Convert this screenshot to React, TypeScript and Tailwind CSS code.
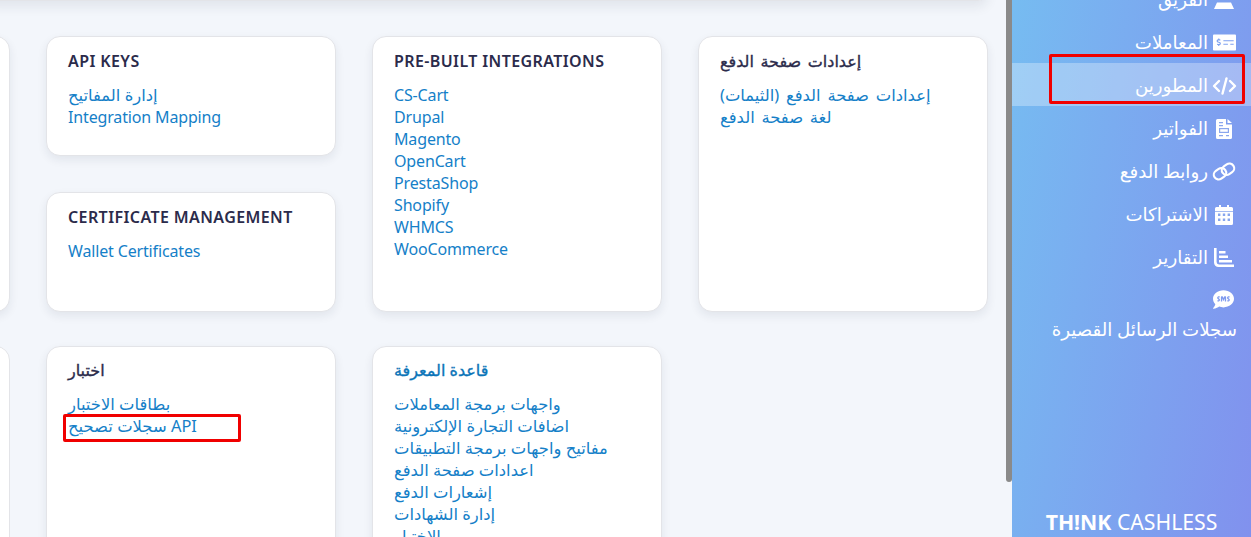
import { FaMoneyCheckAlt, FaSms } from 'react-icons/fa'
import { ReactNode } from 'react'

const font = "font-['Noto_Sans','DejaVu_Sans',sans-serif]"
const isArabic = (s: string) => /[\u0600-\u06ff]/.test(s)

function Card({ title, links, className = '', blueTitle = false }: { title: string; links: string[]; className?: string; blueTitle?: boolean }) {
  return (
    <div className={`w-[290px] shrink-0 rounded-[14px] border border-[#e3e4e8] bg-white px-[21px] shadow-[0_4px_10px_rgba(30,40,70,0.08)] ${className}`}>
      <h3
        className={`h-[24px] leading-[24px] whitespace-nowrap ${
          isArabic(title) ? 'text-[16px] font-normal [-webkit-text-stroke:0.35px_currentColor]' : 'text-[16px] font-semibold tracking-[0.4px]'
        } ${blueTitle ? 'text-[#0b74b8]' : 'text-[#2b2b4b]'}`}
      >
        {title}
      </h3>
      <div className="mt-[11px] flex flex-col items-start leading-[22px] text-[#1580c8]">
        {links.map((l) => (
          <a key={l} className={`h-[22px] whitespace-nowrap ${isArabic(l) ? 'text-[16.4px]' : 'text-[16px] tracking-[-0.15px]'}`}>
            {l}
          </a>
        ))}
      </div>
    </div>
  )
}

function NavItem({ icon, label, active = false }: { icon: ReactNode; label: string; active?: boolean }) {
  return (
    <div className={`flex h-[43px] items-center justify-start gap-[3px] pt-[2px] pr-[14px] text-[18.2px] text-white ${active ? 'bg-white/30' : ''}`} dir="rtl">
      <span className="flex w-[26px] justify-center">{icon}</span>
      <span className="whitespace-nowrap">{label}</span>
    </div>
  )
}

const TeamIcon = () => (
  <svg width="22" height="20" viewBox="0 0 22 20" fill="#fff">
    <circle cx="11" cy="5" r="5" />
    <path d="M4 12.5 h14 l3 6.5 h-20 z" />
  </svg>
)

const CodeIcon = () => (
  <svg width="25" height="18" viewBox="0 0 25 18" fill="none" stroke="#fff" strokeWidth="2.4" strokeLinecap="round" strokeLinejoin="round">
    <path d="M7 4 2 9l5 5" />
    <path d="m18 4 5 5-5 5" />
    <path d="M14.5 1.5 10.5 16.5" />
  </svg>
)

const InvoiceIcon = () => (
  <svg width="16" height="20" viewBox="0 0 16 20">
    <path fill="#fff" d="M1.5 0H10v5.5h6V18.5a1.5 1.5 0 0 1-1.5 1.5h-13A1.5 1.5 0 0 1 0 18.5v-17A1.5 1.5 0 0 1 1.5 0Z" />
    <path fill="#fff" d="M11.5 0 16 4h-4.5Z" />
    <path fill="#8aa6ee" d="M3 3h4v1.2H3ZM3 6h4v1.2H3ZM3 9h10v5H3Zm0 7h4v1.2H3Zm7 0h3v1.2h-3Z" />
    <path fill="#fff" d="M4.2 10.2h7.6v2.6H4.2Z" />
  </svg>
)

const LinkIcon = () => (
  <svg width="24" height="21" viewBox="0 0 24 21" fill="none" stroke="#fff" strokeWidth="2.2">
    <rect x="1.5" y="8" width="13" height="9.5" rx="4.75" transform="rotate(-35 8 12.75)" />
    <rect x="9.5" y="3.5" width="13" height="9.5" rx="4.75" transform="rotate(-35 16 8.25)" />
  </svg>
)

const CalendarIcon = () => (
  <svg width="18" height="20" viewBox="0 0 18 20">
    <path fill="#fff" d="M4 0h2v3H4Zm8 0h2v3h-2ZM1.5 2h15A1.5 1.5 0 0 1 18 3.5v15a1.5 1.5 0 0 1-1.5 1.5h-15A1.5 1.5 0 0 1 0 18.5v-15A1.5 1.5 0 0 1 1.5 2Z" />
    <path fill="#86a5ee" d="M0 6h18v.8H0ZM3 8.5h2.4v2.4H3Zm4.8 0h2.4v2.4H7.8Zm4.8 0H15v2.4h-2.4ZM3 13.5h2.4v2.4H3Zm4.8 0h2.4v2.4H7.8Zm4.8 0H15v2.4h-2.4Z" />
  </svg>
)

const ChartIcon = () => (
  <svg width="20" height="19" viewBox="0 0 20 19" fill="#fff">
    <path d="M0 0h2.6v14a2.4 2.4 0 0 0 2.4 2.4H20V19H4.5A4.5 4.5 0 0 1 0 14.5Z" />
    <path d="M5 3h6.5v2.4H5ZM5 7.6h9v2.4H5ZM5 12h13v2.4H5Z" />
  </svg>
)

export default function App() {
  return (
    <div className={`flex h-[537px] w-[1251px] overflow-hidden bg-[#f3f6fb] ${font}`}>
      {/* main area */}
      <div className="relative w-[1012px] shrink-0 overflow-hidden">
        <div className="-mt-[60px] ml-[-20px] mr-[24px] h-[61px] rounded-[10px] border border-[#e3e4e8] bg-white shadow-[0_6px_12px_rgba(30,40,70,0.08)]" />
        <div className="mt-[35px] flex flex-col gap-[34px] pr-[24px]">
          <div className="flex justify-end gap-[36px]">
            <div className="h-[276px] w-[290px] shrink-0 rounded-[14px] border border-[#e3e4e8] bg-white shadow-[0_4px_10px_rgba(30,40,70,0.08)]" />
            <div className="flex w-[290px] shrink-0 flex-col gap-[36px]">
              <Card title="API KEYS" links={['إدارة المفاتيح', 'Integration Mapping']} className="h-[120px] pt-[12px]" />
              <Card title="CERTIFICATE MANAGEMENT" links={['Wallet Certificates']} className="h-[120px] pt-[12px]" />
            </div>
            <Card
              title="PRE-BUILT INTEGRATIONS"
              links={['CS-Cart', 'Drupal', 'Magento', 'OpenCart', 'PrestaShop', 'Shopify', 'WHMCS', 'WooCommerce']}
              className="h-[276px] pt-[12px]"
            />
            <Card
              title="إعدادات صفحة الدفع"
              links={['إعدادات صفحة الدفع (الثيمات)', 'لغة صفحة الدفع']}
              className="h-[276px] pt-[12px] [word-spacing:2.5px]"
            />
          </div>
          <div className="flex justify-end gap-[36px]">
            <div className="h-[276px] w-[290px] shrink-0 rounded-[14px] border border-[#e3e4e8] bg-white" />
            <Card title="اختبار" links={['بطاقات الاختبار', 'سجلات تصحيح API']} className="h-[276px] pt-[11px]" />
            <Card
              title="قاعدة المعرفة"
              blueTitle
              links={[
                'واجهات برمجة المعاملات',
                'اضافات التجارة الإلكترونية',
                'مفاتيح واجهات برمجة التطبيقات',
                'اعدادات صفحة الدفع',
                'إشعارات الدفع',
                'إدارة الشهادات',
                'الاختبار',
              ]}
              className="h-[276px] pt-[11px]"
            />
            <div className="w-[290px] shrink-0" />
          </div>
        </div>
        {/* scrollbar */}
        <div className="absolute right-0 top-0 h-[482px] w-[6px] rounded-b-[3px] bg-[#8a8a8a]" />
        {/* annotation */}
        <div className="absolute left-[63px] top-[414px] h-[28px] w-[178px] rounded-[2px] border-[3px] border-[#f00000]" />
      </div>

      {/* sidebar */}
      <div className="relative flex w-[239px] shrink-0 flex-col bg-[linear-gradient(100deg,#76bcf1,#8191ee)]">
        <div className="-mt-[23px] flex flex-col">
          <NavItem icon={<TeamIcon />} label="الفريق" />
          <NavItem icon={<FaMoneyCheckAlt className="text-[23px]" />} label="المعاملات" />
          <NavItem icon={<CodeIcon />} label="المطورين" active />
          <NavItem icon={<InvoiceIcon />} label="الفواتير" />
          <NavItem icon={<LinkIcon />} label="روابط الدفع" />
          <NavItem icon={<CalendarIcon />} label="الاشتراكات" />
          <NavItem icon={<ChartIcon />} label="التقارير" />
          <div className="flex flex-col items-end pr-[14px] pt-[11px] text-[18.2px] text-white" dir="ltr">
            <FaSms className="mr-[3px] text-[21px]" />
            <span className="mt-[6px] whitespace-nowrap" dir="rtl">سجلات الرسائل القصيرة</span>
          </div>
        </div>
        <div className="mt-auto mb-[2px] text-center text-[21.2px] leading-[27px] text-white">
          <span className="font-bold">TH!NK</span> CASHLESS
        </div>
        <div className="absolute left-[37px] top-[54px] h-[50px] w-[196px] rounded-[2px] border-[3px] border-[#f00000]" />
      </div>
    </div>
  )
}
